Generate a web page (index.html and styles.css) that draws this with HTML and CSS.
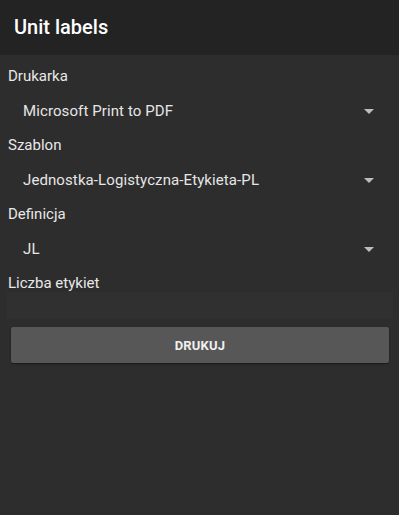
FILE: index.html
```html
<!DOCTYPE html>
<html lang="pl">
<head>
<meta charset="utf-8">
<title>Unit labels</title>
<link rel="stylesheet" href="styles.css">
</head>
<body>
<header class="appbar">Unit labels</header>
<main class="form">
  <div class="label">Drukarka</div>
  <div class="select"><span class="value">Microsoft Print to PDF</span><span class="arrow"></span></div>
  <div class="label">Szablon</div>
  <div class="select"><span class="value">Jednostka-Logistyczna-Etykieta-PL</span><span class="arrow"></span></div>
  <div class="label">Definicja</div>
  <div class="select"><span class="value">JL</span><span class="arrow"></span></div>
  <div class="label label-input">Liczba etykiet</div>
  <div class="input"></div>
  <button class="button">DRUKUJ</button>
</main>
</body>
</html>
```
FILE: styles.css
```css
html, body {
  margin: 0;
  padding: 0;
  height: 100%;
}
body {
  background: #2d2d2d;
  font-family: Roboto, "Liberation Sans", sans-serif;
  color: #e6e6e6;
}
.appbar {
  height: 55px;
  background: #232323;
  display: flex;
  align-items: center;
  padding-left: 14px;
  padding-bottom: 1px;
  box-sizing: border-box;
  font-size: 20px;
  font-weight: 500;
  color: #ffffff;
}
.form {
  display: flex;
  flex-direction: column;
  padding: 4px 6px 0 7px;
}
.label {
  height: 34.5px;
  display: flex;
  align-items: center;
  padding-left: 1px;
  font-size: 15px;
  color: #e8e8e8;
}
.label-input {
  height: 26px;
  padding-top: 8px;
  box-sizing: border-box;
  align-items: center;
}
.select {
  height: 34.5px;
  display: flex;
  align-items: center;
  justify-content: space-between;
  padding: 0 19px 0 16px;
  font-size: 15px;
  color: #e6e6e6;
}
.value {
  letter-spacing: 0.1px;
}
.arrow {
  width: 0;
  height: 0;
  border-left: 5px solid transparent;
  border-right: 5px solid transparent;
  border-top: 5px solid #bdbdbd;
  margin-top: 1px;
}
.input {
  height: 27px;
  background: #303030;
}
.button {
  margin: 8px 4px 0 4px;
  height: 36px;
  background: #575757;
  border: none;
  border-radius: 2px;
  box-shadow: 0 1px 2px rgba(0,0,0,0.45);
  color: #f0f0f0;
  font-family: Roboto, "Liberation Sans", sans-serif;
  font-size: 13px;
  font-weight: 700;
  letter-spacing: 0.2px;
}
```
